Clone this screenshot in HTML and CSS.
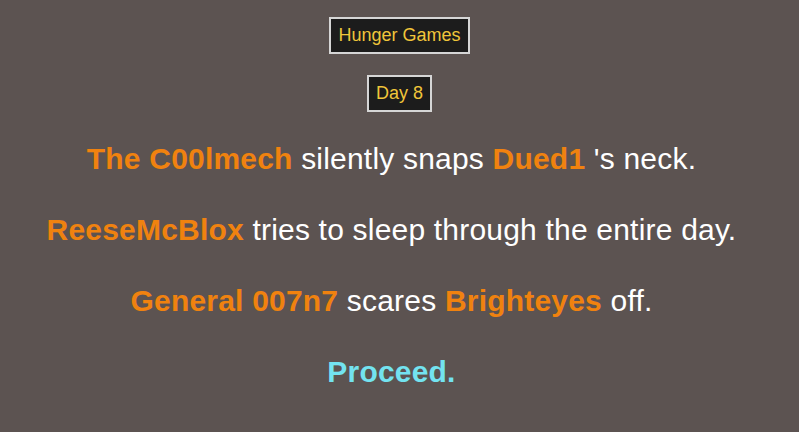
FILE: index.html
```html
<!DOCTYPE html>
<html lang="en">
<head>
    <meta charset="UTF-8">
    <meta name="viewport" content="width=device-width, initial-scale=1.0">
    <title>Hunger Games</title>
    <link rel="stylesheet" href="styles.css">
</head>
<body>

    <div class="header">
        <div class="tag">Hunger Games</div>
        <div class="tag">Day 8</div>
    </div>

    <div class="events">
        <p><span class="name">The C00lmech</span> silently snaps <span class="name">Dued1</span> 's neck.</p>
        <p><span class="name">ReeseMcBlox</span> tries to sleep through the entire day.</p>
        <p><span class="name">General 007n7</span> scares <span class="name">Brighteyes</span> off.</p>
        <p><a class="proceed" href="#">Proceed.</a></p>
    </div>

</body>
</html>
```

FILE: styles.css
```css
body {
    font-family: "Liberation Sans", Arial, sans-serif;
    margin: 0;
    padding-top: 17px;
    background-color: #5c5351;
    color: #ffffff;
    text-align: center;
}
.header {
    display: flex;
    flex-direction: column;
    align-items: center;
    gap: 21px;
}
.tag {
    background-color: #1c1c1c;
    color: #f0c53a;
    border: 2px solid #d6d6d6;
    padding: 6px 7px;
    font-size: 18px;
    line-height: 21px;
}
.events {
    display: flex;
    flex-direction: column;
    gap: 31px;
    margin-top: 27px;
    padding-right: 16px;
}
.events p {
    margin: 0;
    font-size: 30px;
    line-height: 40px;
    letter-spacing: 0.2px;
}
.name {
    color: #f0820f;
    font-weight: bold;
}
.proceed {
    color: #73e3f0;
    font-weight: bold;
    text-decoration: none;
}
```
